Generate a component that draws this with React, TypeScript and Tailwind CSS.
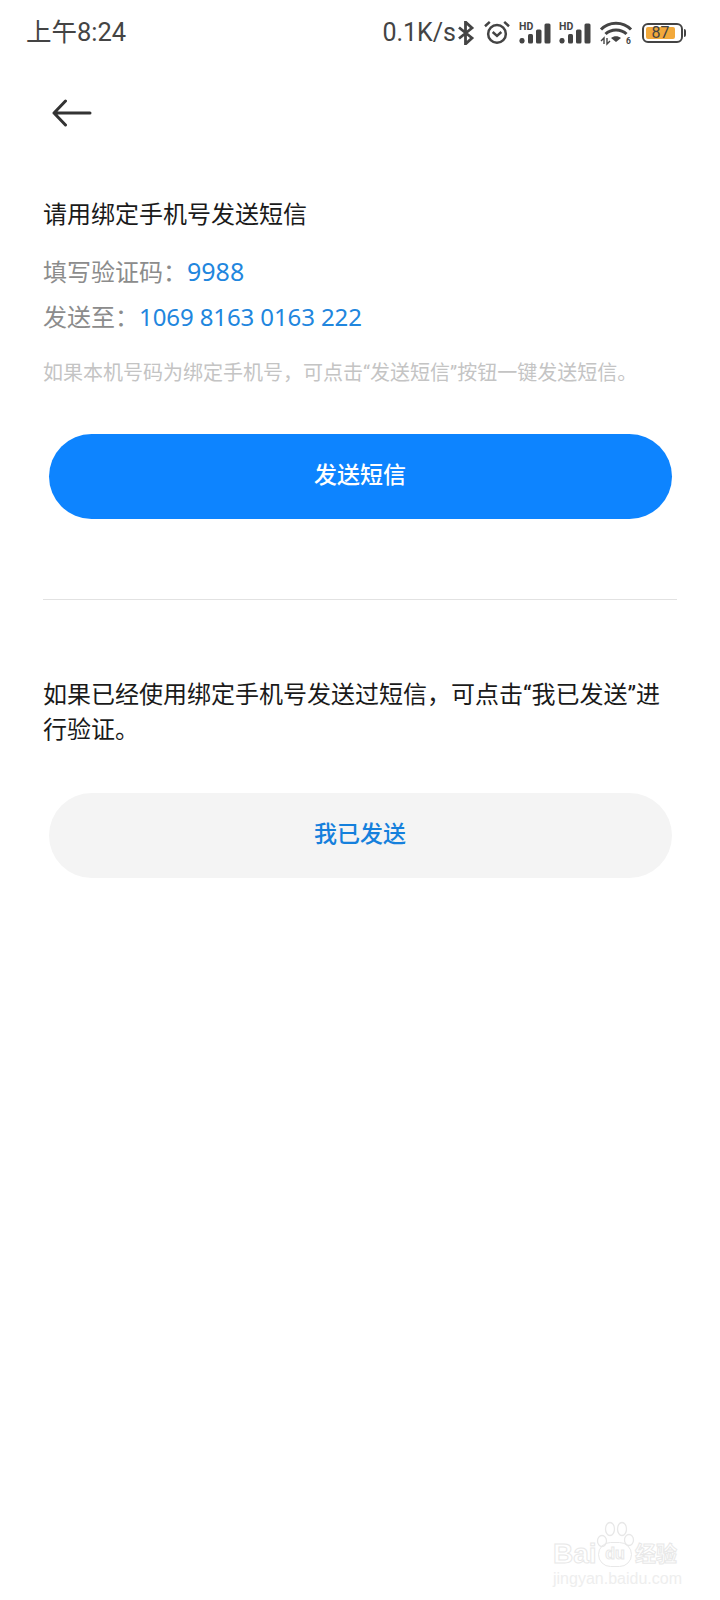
// Phone verification screen: send the SMS from the bound number, then confirm.
import { ReactNode } from 'react';

const CJK = 'font-["Roboto","Noto_Sans_CJK_SC",sans-serif]';
const DIGITS = 'font-["Noto_Sans","Noto_Sans_CJK_SC",sans-serif] leading-none text-[#2186de]';

function SignalIcon() {
  return (
    <svg width="33" height="26" viewBox="0 -4 33 26" fill="#444" className="-mt-[4px] shrink-0">
      <text x="0" y="8" fontSize="10.5" fontWeight="700" fontFamily="Roboto, sans-serif">HD</text>
      <rect x="0.5" y="16" width="5" height="5.5" rx="2.2" />
      <rect x="9" y="12" width="5" height="9.5" rx="1.5" />
      <rect x="17" y="7.5" width="5.5" height="14" rx="1.5" />
      <rect x="25.5" y="1.5" width="6" height="20" rx="1.5" />
    </svg>
  );
}

function StatusBar() {
  return (
    <div className="flex h-[62px] items-center justify-between pl-[26px] pr-[34px] pt-[3px] text-[#444]">
      <span className="text-[25.5px] leading-none">上午8:24</span>
      <div className="flex items-center">
        <span className="text-[25px] leading-none">0.1K/s</span>
        <svg width="18" height="24" viewBox="0 0 18 24" fill="none" stroke="#444" strokeWidth="2.8" className="ml-[1px]">
          <path d="M2 6.5 15 17 8.5 23V1L15 7 2 17.5" />
        </svg>
        <svg width="28" height="25" viewBox="0 0 28 26" fill="none" stroke="#444" strokeWidth="2.6" className="ml-[8px]">
          <circle cx="14" cy="14.5" r="9.2" />
          <path d="M9.5 12.5 14 16.5 18.5 12.5M1.5 6.5 6.5 2M26.5 6.5 21.5 2" />
        </svg>
        <div className="ml-[8px]"><SignalIcon /></div>
        <div className="ml-[7px]"><SignalIcon /></div>
        <svg width="32" height="24" viewBox="0 0 32 24" fill="none" className="ml-[8px] overflow-visible">
          <path d="M1 8.5C9 0 23 0 31 8.5" stroke="#444" strokeWidth="3" />
          <path d="M5.5 13C11 7.5 21 7.5 26.5 13" stroke="#444" strokeWidth="3" />
          <path d="M11 17C14 14.5 18 14.5 21 17L16 21Z" fill="#444" />
          <path d="M1 20 4 17V23M7 17V23L10 20" stroke="#444" strokeWidth="1.4" />
          <text x="26" y="23" fontSize="8.5" fontWeight="700" fill="#444" fontFamily="Roboto, sans-serif">6</text>
        </svg>
        <div className="ml-[10px] flex h-[20px] w-[41px] items-center rounded-[6px] border-2 border-[#444] p-[2px]">
          <div className="flex h-full w-[88%] items-center justify-center rounded-[2px] bg-[#f2a93b] text-[16px] leading-none text-[#444]">
            87
          </div>
        </div>
        <div className="ml-[1px] h-[8px] w-[2px] rounded-r bg-[#444]" />
      </div>
    </div>
  );
}

function PillButton({ className, children }: { className: string; children: ReactNode }) {
  return (
    <button
      type="button"
      className={`ml-[48.5px] flex h-[85px] w-[623px] items-center justify-center rounded-full text-[23px] font-medium ${className}`}
    >
      {children}
    </button>
  );
}

// Faint watermark laid over the bottom corner of the screenshot.
function Watermark() {
  return (
    <div className="absolute left-[553px] top-[1520px] w-[130px]">
      <svg width="40" height="30" viewBox="0 0 40 30" fill="none" stroke="#e8e8e8" strokeWidth="1.3" className="absolute left-[43px] top-0">
        <ellipse cx="6" cy="21" rx="4.5" ry="5.5" />
        <ellipse cx="14" cy="9" rx="4.5" ry="6.5" />
        <ellipse cx="26" cy="9" rx="4.5" ry="6.5" />
        <ellipse cx="33" cy="20" rx="4.5" ry="5.5" />
      </svg>
      <div className="mt-[20px] flex items-center text-[28px] font-bold leading-none text-transparent [-webkit-text-stroke:1px_#e8e8e8]">
        <span className='w-[43px] font-["Liberation_Sans",sans-serif]'>Bai</span>
        <span className='ml-[2px] flex h-[25px] w-[34px] items-center justify-center rounded-full border border-[#e8e8e8] font-["Liberation_Sans",sans-serif] text-[16px]'>du</span>
        <span className="ml-[3px] whitespace-nowrap text-[21px]">经验</span>
      </div>
      <div className='mt-[3px] whitespace-nowrap font-["Liberation_Sans",sans-serif] text-[16px] leading-none text-[#eeeeee]'>jingyan.baidu.com</div>
    </div>
  );
}

export default function App() {
  return (
    <div className={`relative h-[1600px] w-[720px] overflow-hidden bg-white ${CJK}`}>
      <StatusBar />

      <svg width="40" height="28" viewBox="0 0 40 28" fill="none" stroke="#333" strokeWidth="3" strokeLinecap="round" strokeLinejoin="round" className="ml-[52px] mt-[37px]">
        <path d="M38 14H2M13.5 2 2 14 13.5 26" />
      </svg>

      <p className="ml-[43px] mt-[70px] text-[24px] leading-[36px] text-[#1a1a1a]">请用绑定手机号发送短信</p>
      <p className="ml-[43px] mt-[22px] text-[24px] leading-[36px] text-[#8c8c8c]">
        填写验证码：<span className={`${DIGITS} text-[25px]`}>9988</span>
      </p>
      <p className="ml-[43px] mt-[9px] text-[24px] leading-[36px] text-[#8c8c8c]">
        发送至：<span className={`${DIGITS} text-[24px] tracking-[-0.1px]`}>1069 8163 0163 222</span>
      </p>
      <p className="ml-[43px] mt-[22px] whitespace-nowrap text-[20px] leading-[30px] text-[#c4c4c4]">
        如果本机号码为绑定手机号，可点击“发送短信”按钮一键发送短信。
      </p>

      <div className="mt-[46px]">
        <PillButton className="bg-[#0d84ff] text-white">发送短信</PillButton>
      </div>

      <div className="ml-[43px] mt-[80px] h-px w-[634px] bg-[#e2e2e2]" />

      <p className="ml-[43px] mt-[78px] w-[640px] text-[24px] leading-[35px] text-[#1a1a1a]">
        如果已经使用绑定手机号发送过短信，可点击“我已发送”进行验证。
      </p>

      <div className="mt-[45px]">
        <PillButton className="bg-[#f4f4f4] text-[#1580dc]">我已发送</PillButton>
      </div>

      <Watermark />
    </div>
  );
}
